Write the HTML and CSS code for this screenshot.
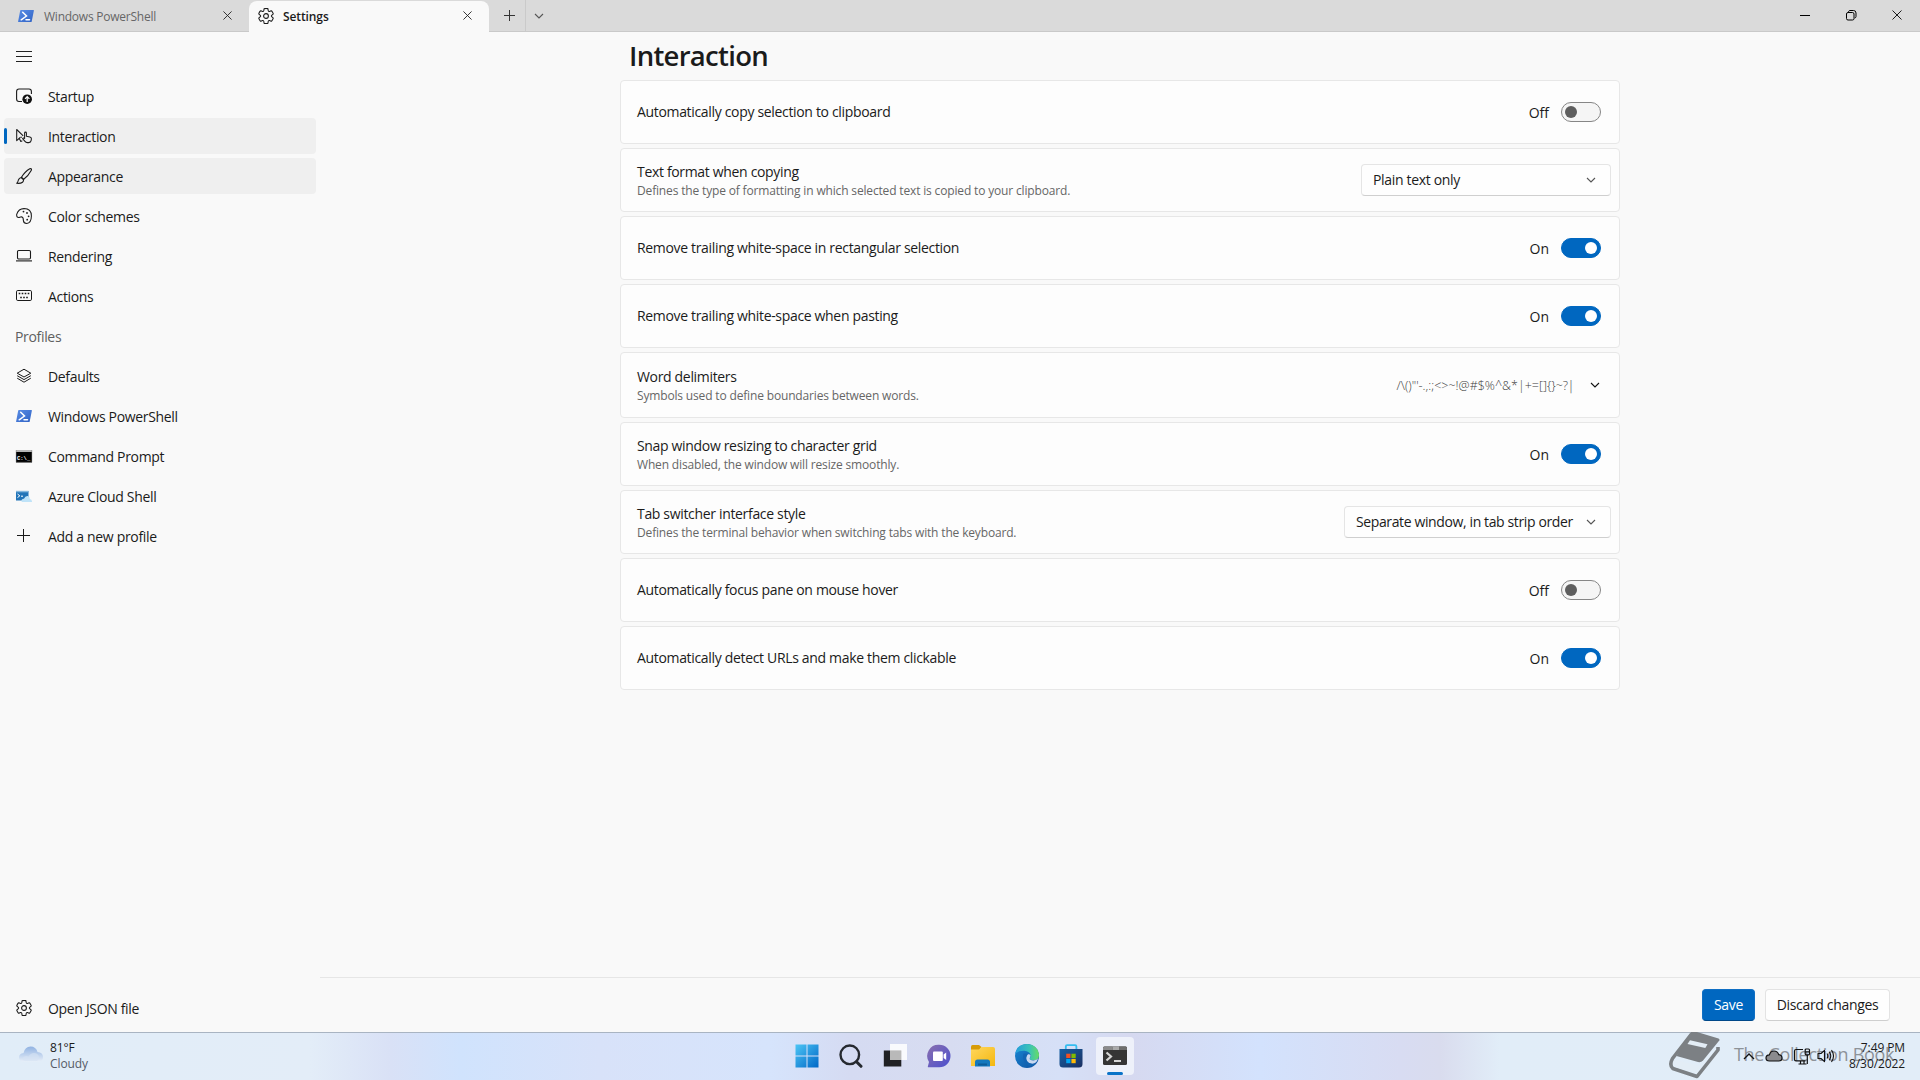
FILE: index.html
```html
<!DOCTYPE html>
<html lang="en">
<head>
  <meta charset="UTF-8" />
  <meta name="viewport" content="width=device-width, initial-scale=1.0"/>
  <title>Settings</title>
  <link rel="stylesheet" href="styles.css">
</head>
<body>
  <!-- shared icons -->
  <svg class="defs" width="0" height="0">
    <linearGradient id="psGrad" x1="0" y1="0" x2="1" y2="1"><stop offset="0" stop-color="#5a8ee6"/><stop offset="1" stop-color="#2f62c4"/></linearGradient>
    <symbol id="gear" viewBox="1 1 18 18">
      <path fill="none" stroke="currentColor" stroke-width="1.2" d="M1.91 7.38A8.5 8.5 0 0 1 3.7 4.3a.5.5 0 0 1 .54-.13l1.92.68a1 1 0 0 0 1.32-.76l.36-2a.5.5 0 0 1 .4-.4 8.53 8.53 0 0 1 3.55 0c.2.04.35.2.38.4l.37 2a1 1 0 0 0 1.32.76l1.92-.68a.5.5 0 0 1 .54.13 8.5 8.5 0 0 1 1.78 3.08c.06.2 0 .4-.15.54l-1.56 1.32a1 1 0 0 0 0 1.52l1.56 1.32a.5.5 0 0 1 .15.54 8.5 8.5 0 0 1-1.78 3.08.5.5 0 0 1-.54.13l-1.92-.68a1 1 0 0 0-1.32.76l-.37 2a.5.5 0 0 1-.38.4 8.53 8.53 0 0 1-3.56 0 .5.5 0 0 1-.39-.4l-.36-2a1 1 0 0 0-1.32-.76l-1.92.68a.5.5 0 0 1-.54-.13 8.5 8.5 0 0 1-1.78-3.08.5.5 0 0 1 .15-.54l1.56-1.32a1 1 0 0 0 0-1.52L2.06 7.92a.5.5 0 0 1-.15-.54Z"/>
      <circle cx="10" cy="10" r="2.7" fill="none" stroke="currentColor" stroke-width="1.2"/>
    </symbol>
    <symbol id="ps" viewBox="0 0 16 16">
      <path fill="url(#psGrad)" d="M3 2h12.4q.6 0 .5.6L13.700 13.400q-.1.6-.8.600H.6q-.6 0-.5-.6L2.200 2.600Q2.300 2 3 2z"/>
      <path fill="none" stroke="#fff" stroke-width="1.500" stroke-linecap="round" d="M4.700 4.300 8.500 8 3.200 11.800M8 11.800h3.500"/>
    </symbol>
    <symbol id="x" viewBox="0 0 10 10"><path fill="none" stroke="currentColor" d="M.5.5l9 9M9.500.5l-9 9"/></symbol>
    <symbol id="down" viewBox="0 0 10 6"><path fill="none" stroke="currentColor" stroke-width="1.100" d="M1 1l4 4 4-4"/></symbol>
  </svg>

  <header class="titlebar">
    <div class="tab">
      <svg class="tab-icon" viewBox="0 0 16 16"><use href="#ps"/></svg>
      <span>Windows PowerShell</span>
      <svg class="tab-close"><use href="#x"/></svg>
    </div>
    <div class="tab active">
      <svg class="tab-icon"><use href="#gear"/></svg>
      <span>Settings</span>
      <svg class="tab-close"><use href="#x"/></svg>
    </div>
    <div class="new-tab">
      <svg width="11" height="11" viewBox="0 0 11 11"><path stroke="#333" d="M5.500 0v11M0 5.500h11"/></svg>
    </div>
    <div class="tab-menu"><svg width="10" height="6"><use href="#down"/></svg></div>
    <div class="window-buttons">
      <div><svg width="10" height="10"><path stroke="#000" d="M0 5.500h10"/></svg></div>
      <div><svg width="11" height="11" viewBox="0 0 11 11" fill="none" stroke="#000"><rect x=".5" y="2.500" width="7.500" height="7.500" rx="1.500"/><path d="M2.500 2V1.600Q3 .5 4 .5h3.500Q10 .5 10 3v3.500q0 1.200-1.400 1.600"/></svg></div>
      <div><svg width="10" height="10"><use href="#x"/></svg></div>
    </div>
  </header>

  <div class="main">
    <nav class="sidebar">
      <div class="hamburger">
        <svg width="16" height="11" viewBox="0 0 16 11"><path stroke="#222" d="M0 .5h16M0 5.500h16M0 10.500h16"/></svg>
      </div>
      <div class="nav-item">
        <svg viewBox="0 0 16 16"><path fill="none" stroke="#1a1a1a" stroke-width="1.100" d="M6 13.500H3Q.6 13.500.6 11V3.500Q.6 1 3 1h10q2.400 0 2.400 2.500V6"/><circle cx="11.200" cy="11.200" r="4.800" fill="#111"/><path fill="none" stroke="#fff" stroke-width="1.200" d="M11.200 14V8.800M9 10.800l2.200-2.200 2.200 2.200"/></svg>
        <span>Startup</span>
      </div>
      <div class="nav-item selected">
        <svg viewBox="0 0 16 16" fill="none" stroke="#1a1a1a" stroke-width="1.050" stroke-linejoin="round"><path d="M4.200 9.500L.7 12.600V1.500l6.500 6.300"/><path d="M3.300 10.500l1.500 2.900 1.500-.6M4.300 9.300h1.600"/><path d="M8.600 9.800V5q0-.9.900-.9t.9.900v3.300l3.500.8q1.600.4 1.500 1.900l-.3 1.700q-.3 1.900-2.300 1.900h-1.500q-1.400 0-2.300-1.200L6.600 10.600q.9-1.200 2-.2z"/></svg>
        <span>Interaction</span>
      </div>
      <div class="nav-item hover">
        <svg viewBox="0 0 16 16" fill="none" stroke="#1a1a1a" stroke-width="1.100" stroke-linejoin="round"><path d="M5.300 9.500Q9 3.500 13.800.8q1.200-.5 1.600.3.200.6-.2 1.300Q12.500 7.500 7.500 11.500z"/><path d="M5.300 9.500Q3 9.800 2.400 12 2 14 .7 15.300q4 .4 5.800-1Q7.700 13.200 7.500 11.500 6.700 10 5.300 9.500z"/></svg>
        <span>Appearance</span>
      </div>
      <div class="nav-item">
        <svg viewBox="0 0 16 16" fill="none" stroke="#1a1a1a" stroke-width="1.050"><path d="M.7 6.300Q2.500.6 8 .6q7.400.2 7.400 7.400-.1 7.200-4.700 7.400-3-.1-3.300-2.800 0-3.400-1.800-3.800-1 0-2.400.6Q.3 9.800.7 6.300z"/><g fill="#1a1a1a" stroke="none"><circle cx="7.500" cy="3.600" r=".9"/><circle cx="11" cy="5" r=".9"/><circle cx="12.600" cy="8.300" r=".9"/><circle cx="11.200" cy="11.700" r=".9"/></g></svg>
        <span>Color schemes</span>
      </div>
      <div class="nav-item">
        <svg viewBox="0 0 16 16" fill="none" stroke="#1a1a1a" stroke-width="1.100"><rect x="1.500" y="2.500" width="13" height="8.500" rx="1.200"/><path d="M0 12.900h16"/></svg>
        <span>Rendering</span>
      </div>
      <div class="nav-item">
        <svg viewBox="0 0 16 16" fill="none" stroke="#1a1a1a"><rect x=".5" y="2.500" width="15" height="10" rx="1.300"/><path stroke-width="1.400" stroke-dasharray="1.600 1.400" d="M2.700 5.500h11M4.200 9.500h8"/></svg>
        <span>Actions</span>
      </div>
      <div class="nav-header">Profiles</div>
      <div class="nav-item">
        <svg viewBox="0 0 16 16" fill="none" stroke="#1a1a1a" stroke-linejoin="round"><path d="M8 1.200l6.800 4L8 9 1.200 5.200z"/><path d="M1.200 7.700L8 11.600l6.800-3.900M1.200 10.200L8 14.200l6.800-4"/></svg>
        <span>Defaults</span>
      </div>
      <div class="nav-item">
        <svg><use href="#ps"/></svg>
        <span>Windows PowerShell</span>
      </div>
      <div class="nav-item">
        <svg class="cmd" viewBox="0 0 16 16"><path d="M0 2h16v12.500H0z"/><path fill="#b5b5b5" d="M0 2h16v2H0z"/><path fill="none" stroke="#777" stroke-width=".5" d="M.2 2v12.300h15.600V2"/><text x="1" y="11.500" class="cmd-text">C:\_</text></svg>
        <span>Command Prompt</span>
      </div>
      <div class="nav-item">
        <svg viewBox="0 0 16 16"><path fill="#2274b8" d="M0 3h12.500v9.500H0z"/><path fill="#84b7dd" d="M0 2.800h12.500v1.500H0z"/><path fill="none" stroke="#fff" d="M1.500 6l2.300 1.800-2.300 1.800M5 8.200h2"/><path fill="#bfe3f8" d="M6 14q-1-.8-.2-2.200.9-1.200 2.200-1Q9.200 7.600 11.800 8q2 .6 2.100 2.900 2.200.3 2.100 3.100z"/></svg>
        <span>Azure Cloud Shell</span>
      </div>
      <div class="nav-item">
        <svg viewBox="0 0 16 16"><path stroke="#1a1a1a" d="M7.500 1v13M1 7.500h13"/></svg>
        <span>Add a new profile</span>
      </div>
      <div class="nav-item bottom">
        <svg><use href="#gear"/></svg>
        <span>Open JSON file</span>
      </div>
    </nav>

    <section class="content">
      <div class="settings">
        <h1>Interaction</h1>
        <div class="card">
          <div class="label">Automatically copy selection to clipboard</div>
          <div class="toggle"><span>Off</span><i></i></div>
        </div>
        <div class="card">
          <div class="label two-line">Text format when copying<small>Defines the type of formatting in which selected text is copied to your clipboard.</small></div>
          <div class="combo">Plain text only<svg><use href="#down"/></svg></div>
        </div>
        <div class="card">
          <div class="label">Remove trailing white-space in rectangular selection</div>
          <div class="toggle on"><span>On</span><i></i></div>
        </div>
        <div class="card">
          <div class="label">Remove trailing white-space when pasting</div>
          <div class="toggle on"><span>On</span><i></i></div>
        </div>
        <div class="card expander">
          <div class="label two-line">Word delimiters<small>Symbols used to define boundaries between words.</small></div>
          <div class="delimiters"><span>/\()"'-.,:;&lt;&gt;~!@#$%^&amp;*|+=[]{}~?<b>│</b></span><svg><use href="#down"/></svg></div>
        </div>
        <div class="card">
          <div class="label two-line">Snap window resizing to character grid<small>When disabled, the window will resize smoothly.</small></div>
          <div class="toggle on"><span>On</span><i></i></div>
        </div>
        <div class="card">
          <div class="label two-line">Tab switcher interface style<small>Defines the terminal behavior when switching tabs with the keyboard.</small></div>
          <div class="combo wide">Separate window, in tab strip order<svg><use href="#down"/></svg></div>
        </div>
        <div class="card">
          <div class="label">Automatically focus pane on mouse hover</div>
          <div class="toggle"><span>Off</span><i></i></div>
        </div>
        <div class="card">
          <div class="label">Automatically detect URLs and make them clickable</div>
          <div class="toggle on"><span>On</span><i></i></div>
        </div>
      </div>
      <div class="footer">
        <button class="btn save">Save</button>
        <button class="btn discard">Discard changes</button>
      </div>
    </section>
  </div>

  <footer class="taskbar">
    <div class="weather">
      <svg width="26" height="18" viewBox="0 0 26 18"><defs><linearGradient id="cl" x2="0" y2="1"><stop offset="0" stop-color="#90b2e2"/><stop offset="1" stop-color="#e6eef8"/></linearGradient></defs><path fill="url(#cl)" d="M6 16.500q-5 0-5-4 0-4 4.500-4.500Q7 1.500 12.500 1.500q5.500 0 7 5.500 5.500.3 5.500 5 0 4.500-5 4.500z"/><path fill="#d5e2f4" d="M8 16q-3 0-3.500-2.500 2-3.500 6-2Q12.500 8 16 8q4 0 5 4 0 4-3 4z" opacity=".6"/></svg>
      <div>81°F<br><span>Cloudy</span></div>
    </div>

    <div class="apps">
      <div class="app"><svg viewBox="0 0 24 24"><defs><linearGradient id="win" x2="1" y2="1"><stop offset="0" stop-color="#4cc5f5"/><stop offset="1" stop-color="#0067c6"/></linearGradient></defs><path fill="url(#win)" d="M.5.5h11v11H.5zM12.500.5h11v11h-11zM.5 12.500h11v11H.5zM12.500 12.500h11v11h-11z"/></svg></div>
      <div class="app"><svg viewBox="0 0 24 24" fill="none" stroke="#25292f" stroke-width="2.400"><circle cx="10.800" cy="10.800" r="9.300"/><path stroke-width="3" stroke-linecap="round" d="M17.500 17.700l4.500 4.600"/></svg></div>
      <div class="app"><svg viewBox="0 0 24 24"><path fill="#202124" d="M.8 6.500h17.500v16H.8z"/><path fill="#fff" fill-opacity=".85" d="M7 0h17v16H7z"/><path fill="#b9b9b9" d="M7 6.500h11.300V16H7z"/></svg></div>
      <div class="app"><svg viewBox="0 0 24 24"><defs><linearGradient id="chat" x2="1" y2="1"><stop offset="0" stop-color="#8a6fae"/><stop offset="1" stop-color="#4b50cf"/></linearGradient></defs><path fill="url(#chat)" d="M12.300.8a11.200 11.200 0 0 1 0 22.400H1.500q-1 0-.6-1L2 18A11.200 11.200 0 0 1 12.300.8z"/><rect x="6" y="7.500" width="9.800" height="9.500" rx="1" fill="#fff"/><path fill="#fff" d="M16.600 10.500l2.600-2v7.500l-2.600-2z"/></svg></div>
      <div class="app"><svg viewBox="0 0 24 24"><defs><linearGradient id="fold" x2="1" y2="1"><stop offset="0" stop-color="#ffd75e"/><stop offset="1" stop-color="#f4b70f"/></linearGradient></defs><path fill="#d79b08" d="M0 3q0-2 1.500-2H8l2.500 2-2 3H0z"/><path fill="url(#fold)" d="M0 5.500h8L10.500 3H22q2 0 2 2v17H0z"/><path fill="#1478bd" d="M4 22.500V18q0-2.500 2.500-2.500h10Q19 15.500 19 18v4.500z"/><path fill="#0d5d99" d="M7 19.500h9v2H7z"/></svg></div>
      <div class="app"><svg viewBox="0 0 24 24"><defs><linearGradient id="e1" x2="1"><stop offset="0" stop-color="#249bdd"/><stop offset=".6" stop-color="#39c3b7"/><stop offset="1" stop-color="#69dc64"/></linearGradient><linearGradient id="e2" y2="1"><stop offset="0" stop-color="#1788d6"/><stop offset="1" stop-color="#10509e"/></linearGradient></defs><circle cx="12" cy="12" r="12" fill="url(#e2)"/><path fill="url(#e1)" d="M.2 10Q1.500 0 12 0q10 .5 12 10 .4 6-5.500 6.200-4.300 0-3.800-2 1.500-1.500.8-3.700Q14 7.200 9.500 6.800 3 6.600.2 10z"/><path fill="#c8d8f0" d="M14.700 14.200q-.5 2 3.800 2.200 3-.1 4.500-1.800-1 4-4 5-5 .8-7.200-2.600Q10 13.500 13 10.300q2.800-.4 2.600 1.500z"/><path fill="#1265b3" d="M8.300 9.800Q6.500 18 14 22q3.500.5 6.500-2.500-6 1.500-8.500-2.500-1.900-3.500.5-6.500-2-1.800-4.200-.7z"/></svg></div>
      <div class="app"><svg viewBox="0 0 24 24"><defs><linearGradient id="st" x2="1" y2="1"><stop offset="0" stop-color="#1561a5"/><stop offset="1" stop-color="#1b2f61"/></linearGradient></defs><path fill="none" stroke="#35bdf0" stroke-width="1.800" d="M6.800 6V2.500q0-1.300 1.300-1.300h8q1.300 0 1.300 1.300V6"/><path fill="url(#st)" d="M.5 5h23v15q0 3.500-3.500 3.500H4Q.5 23.500.5 20z"/><path fill="#f05022" d="M7.200 9.700h4.300V14H7.200z"/><path fill="#80bb02" d="M12.400 9.700h4.300V14h-4.300z"/><path fill="#04a5f0" d="M7.200 14.900h4.300v4.300H7.200z"/><path fill="#ffba08" d="M12.400 14.900h4.300v4.300h-4.300z"/></svg></div>
      <div class="app current"><svg viewBox="0 0 24 24"><rect y="2.500" width="24" height="18.500" rx="1.500" fill="#353535"/><path fill="#8b8b8b" d="M1 2.500h8.500V6H0V3.500z"/><path fill="#aaa" d="M9.500 2.500H16V6H9.500z"/><path fill="#6e6e6e" d="M16 2.500h7l1 1V6h-8z"/><path fill="none" stroke="#d5d5d5" stroke-width="2.200" d="M3.500 8.500l4.500 4-4.500 4"/><path stroke="#fff" stroke-width="1.600" d="M11 17h7"/></svg></div>
    </div>

    <div class="watermark">
      <svg width="52" height="48" viewBox="0 0 52 48"><path fill="#7c8084" d="M23 0h6l21.500 6.500q1.500.5.800 2L35 28.500q-2 2.300-5 1.600L8.500 24z"/><path fill="#e3edf6" d="M22 8.300l17.500 4-2.200 3.700-17.800-4z"/><path fill="none" stroke="#7c8084" stroke-width="3.600" stroke-linejoin="round" d="M23.500 2L4.500 26.500Q1 33 4.800 36.500L29 44.500 50 18v-3"/><path fill="#e3edf6" d="M7 27.500l21.500 6q3.500.7 6-1.500l-6 9.500L7.500 35q-4-3-.5-7.500z"/></svg>
      <span>The Collection Book</span>
    </div>

    <div class="tray">
      <svg width="12" height="8" viewBox="0 0 12 8"><path fill="none" stroke="#111" stroke-width="1.400" d="M1 7l5-5 5 5"/></svg>
      <svg width="18" height="12" viewBox="0 0 18 12"><path fill="#8b8b8e" stroke="#111" stroke-width="1.200" d="M4.500 11Q1 11 1 8t3.400-3.200Q5.500 1 9 1t4.700 3.600Q17 5 17 8t-3.300 3z"/></svg>
      <svg width="18" height="18" viewBox="0 0 18 18" fill="none" stroke="#111" stroke-width="1.200"><path d="M10 2.500H3Q1.500 2.500 1.500 4v8.500q0 1.300 1.500 1.300h9.500M5.500 17h8M7.500 14v3M11 14v3"/><rect x="12.200" y="2" width="4.300" height="5.800" rx="1"/><path d="M14.300 8v9M12.500 4.900h4"/></svg>
      <svg class="volume" width="18" height="16" viewBox="0 0 18 16" fill="none" stroke="#111" stroke-width="1.100"><path stroke-linejoin="round" d="M1 5.500h3L7.500 2.300v11.400L4 10.500H1zM10 5.500q1.600 2.500 0 5M12.300 3.700q2.900 4.300 0 8.600M14.500 2q4 6 0 12"/></svg>
      <div class="clock">7:49 PM<br>8/30/2022</div>
    </div>
  </footer>
</body>
</html>
```
FILE: styles.css
```css
* {
  box-sizing: border-box;
}
body {
  margin: 0;
  height: 1080px;
  display: flex;
  flex-direction: column;
  overflow: hidden;
  background: #f9f9f9;
  color: #1b1b1b;
  font-family: "Open Sans", "Noto Sans", sans-serif;
  font-size: 14px;
  line-height: 20px;
  letter-spacing: -0.33px;
}
svg {
  display: block;
  flex: none;
}
.defs {
  position: absolute;
}

/* title bar */
.titlebar {
  height: 32px;
  display: flex;
  align-items: stretch;
  background: #dadada;
  border-bottom: 1px solid #c9c9c9;
}
.tab {
  width: 249px;
  display: flex;
  align-items: center;
  padding: 0 17px 0 18px;
  font-size: 12px;
  letter-spacing: -0.24px;
  color: #666;
}
.tab.active {
  width: 240px;
  height: 32px;
  margin-top: 1px;
  padding: 0 17px 3px 9px;
  background: #f9f9f9;
  border-radius: 8px 8px 0 0;
  font-weight: 600;
  letter-spacing: -0.1px;
  color: #1b1b1b;
}
.tab span {
  margin: 3px auto 0 10px;
}
.tab.active span {
  margin-left: 9px;
}
.tab-icon {
  width: 16px;
  height: 16px;
}
.tab-close {
  width: 9px;
  height: 9px;
  color: #222;
}
.new-tab {
  width: 37px;
  padding: 10px 0 0 15px;
  border-right: 1px solid #cacaca;
}
.tab-menu {
  padding: 13px 0 0 8px;
  color: #555;
}
.window-buttons {
  display: flex;
  margin-left: auto;
}
.window-buttons div {
  width: 46px;
  padding-bottom: 1px;
  display: flex;
  align-items: center;
  justify-content: center;
}

/* sidebar */
.main {
  height: 1000px;
  display: flex;
}
.sidebar {
  width: 320px;
  padding: 4px;
  display: flex;
  flex-direction: column;
}
.hamburger {
  height: 40px;
  padding: 15px 0 0 12px;
}
.nav-item {
  height: 36px;
  width: 312px;
  margin: 2px 0;
  padding-left: 12px;
  display: flex;
  align-items: center;
  gap: 16px;
  border-radius: 4px;
}
.nav-item svg {
  width: 16px;
  height: 16px;
}
.nav-item span {
  padding-top: 2px;
}
.nav-item.selected,
.nav-item.hover {
  background: #efefef;
}
.nav-item.selected {
  padding-left: 0;
  gap: 0;
}
.nav-item.selected::before {
  content: "";
  width: 3px;
  height: 16px;
  border-radius: 2px;
  background: #0067c0;
  margin-right: 9px;
}
.nav-item.selected svg {
  margin-right: 16px;
}
.nav-header {
  height: 40px;
  padding: 11px 0 0 11px;
  font-weight: 500;
  color: #606060;
}
.nav-item.bottom {
  margin-top: auto;
}
.cmd {
  overflow: visible;
}
.cmd-text {
  font: bold 5.5px "Liberation Mono", monospace;
  letter-spacing: 0;
  fill: #fff;
}

/* settings list */
.content {
  flex: 1;
  display: flex;
  flex-direction: column;
}
.settings {
  width: 1000px;
  margin-left: 300px;
  display: flex;
  flex-direction: column;
  gap: 4px;
}
h1 {
  margin: 0 0 0 9px;
  height: 44px;
  font-size: 27.5px;
  line-height: 47px;
  font-weight: 600;
  letter-spacing: -0.72px;
}
.card {
  height: 64px;
  display: flex;
  align-items: center;
  justify-content: space-between;
  padding: 0 8px 0 16px;
  background: #fdfdfd;
  border: 1px solid #e7e7e7;
  border-radius: 4px;
}
.card.expander {
  height: 66px;
}
.label {
  padding-bottom: 1px;
}
.label.two-line {
  padding: 1px 0 0;
}
.label small {
  display: block;
  padding-top: 1px;
  font-size: 12px;
  line-height: 16px;
  letter-spacing: -0.16px;
  color: #666;
}
.toggle {
  display: flex;
  align-items: center;
  gap: 12px;
  padding-right: 10px;
}
.toggle span {
  padding-top: 2px;
  letter-spacing: 0;
}
.toggle i {
  width: 40px;
  height: 20px;
  padding: 3px;
  display: flex;
  border: 1px solid #868686;
  border-radius: 10px;
  background: #f5f5f5;
}
.toggle i::before {
  content: "";
  width: 12px;
  height: 12px;
  border-radius: 50%;
  background: #5e5e5e;
}
.toggle.on i {
  justify-content: flex-end;
  background: #0067c0;
  border-color: #0067c0;
}
.toggle.on i::before {
  background: #fff;
}
.combo {
  width: 250px;
  height: 32px;
  display: flex;
  align-items: center;
  justify-content: space-between;
  padding: 0 14px 0 11px;
  background: #fefefe;
  border: 1px solid #e5e5e5;
  border-bottom-color: #cfcfcf;
  border-radius: 4px;
  white-space: nowrap;
}
.combo.wide {
  width: 267px;
  letter-spacing: -0.38px;
}
.combo svg,
.delimiters svg {
  width: 10px;
  height: 6px;
  color: #555;
}
.delimiters {
  display: flex;
  align-items: center;
  gap: 15px;
  padding-right: 11px;
  font-size: 12.5px;
  font-weight: 300;
  color: #3c3c3c;
  letter-spacing: 0;
}
.delimiters span {
  padding-top: 1px;
}
.delimiters b {
  font-size: 11px;
  font-weight: 300;
  color: #777;
}
.delimiters svg {
  color: #111;
}

/* footer */
.footer {
  margin-top: auto;
  height: 55px;
  display: flex;
  justify-content: flex-end;
  gap: 10px;
  padding: 11px 30px 0 0;
  border-top: 1px solid #e6e6e6;
}
.btn {
  height: 32px;
  width: 125px;
  padding: 0;
  font: inherit;
  letter-spacing: inherit;
  color: #1b1b1b;
  background: #fefefe;
  border: 1px solid #e3e3e3;
  border-bottom-color: #cfcfcf;
  border-radius: 4px;
}
.btn.save {
  width: 53px;
  color: #fff;
  background: #0067c0;
  border-color: #0f6fc4;
  border-bottom-color: #00498a;
}

/* taskbar */
.taskbar {
  position: relative;
  height: 48px;
  display: flex;
  justify-content: space-between;
  border-top: 1px solid #a9b4c2;
  background: linear-gradient(90deg, #e1edf8 0, #e3edf8 310px, #d9e1f6 390px, #d0e3fd 460px, #d8e2f9 600px, #d6e4fc 770px, #d5dbf2 850px, #d7dcf1 950px, #d6e0f7 1060px, #d6d9f0 1130px, #d3e2fd 1260px, #d8dcf2 1400px, #d9dcee 1440px, #e1edf8 1500px, #e2edf8 1920px);
  font-size: 12px;
  line-height: 16px;
  letter-spacing: -0.1px;
}
.weather {
  width: 300px;
  padding: 7px 0 0 18px;
  display: flex;
  gap: 6px;
}
.weather svg {
  margin-top: 5px;
}
.weather span {
  color: #555b66;
}
.apps {
  position: absolute;
  left: 785px;
  top: 0;
  display: flex;
}
.app {
  width: 44px;
  height: 47px;
  padding: 11px 10px;
}
.app svg {
  width: 24px;
  height: 24px;
}
.app.current {
  width: 38px;
  height: 38px;
  margin: 4px 0 0 3px;
  padding: 7px;
  border-radius: 4px;
  background: #eef1fa;
  position: relative;
}
.app.current::after {
  content: "";
  position: absolute;
  left: 11px;
  bottom: 0;
  width: 16px;
  height: 3px;
  border-radius: 2px;
  background: #0a73c8;
}
.watermark {
  position: absolute;
  left: 1668px;
  top: -1px;
  display: flex;
  gap: 14px;
  font-size: 18px;
  line-height: 45px;
  letter-spacing: -0.3px;
  color: #8d9298;
  white-space: nowrap;
}
.tray {
  position: relative;
  display: flex;
  align-items: center;
  gap: 10px;
  padding: 0 15px 1px 0;
}
.volume {
  margin-left: -4px;
}
.clock {
  text-align: right;
  margin-left: 4px;
}
```
